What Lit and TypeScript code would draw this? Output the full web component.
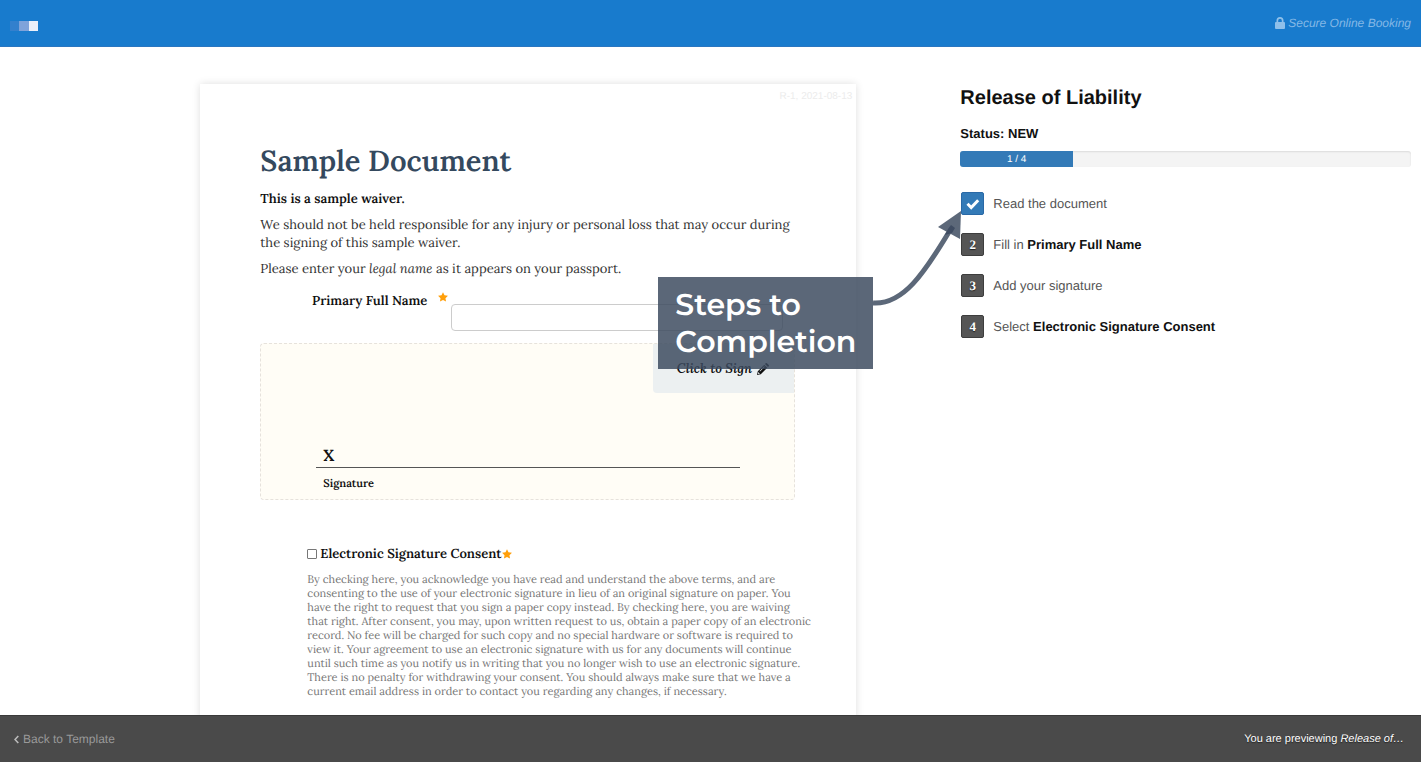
import { LitElement, html, css, svg } from "lit";
import { customElement, state } from "lit/decorators.js";
import { classMap } from "lit/directives/class-map.js";
import { styleMap } from "lit/directives/style-map.js";

const star = html`<svg class="star" viewBox="0 0 20 20" aria-hidden="true">
  <path d="M10 .3l3 6.300 6.900.9-5 4.800 1.200 6.900-6.100-3.400-6.100 3.400 1.200-6.900L.1 7.500l6.900-.9z" />
</svg>`;

const check = svg`<path d="M1.500 5.800L5.200 9.500L12.200 2.300" fill="none" stroke="#fff" stroke-width="3" />`;

interface Step {
  action: string;
  field?: string;
  done: boolean;
}

@customElement("app-root")
export class AppRoot extends LitElement {
  @state() private steps: Step[] = [
    { action: "Read the document", done: true },
    { action: "Fill in", field: "Primary Full Name", done: false },
    { action: "Add your signature", done: false },
    { action: "Select", field: "Electronic Signature Consent", done: false },
  ];

  static styles = css`
    :host {
      display: grid;
      grid-template-rows: auto minmax(0, 1fr) auto;
      height: 100vh;
      background: #fff;
      color: #555;
      font: 13px/18px "Helvetica Neue", "Liberation Sans", Arial, sans-serif;
      text-rendering: geometricPrecision;
    }
    *,
    *::before {
      box-sizing: border-box;
    }
    h1,
    h2,
    p,
    ol {
      margin: 0;
      padding: 0;
    }
    .top {
      display: flex;
      justify-content: space-between;
      align-items: center;
      height: 47px;
      padding: 0 10px;
      background: #187bcd;
      border-bottom: 1px solid #2a76c0;
    }
    .brand {
      display: flex;
      margin-top: 5px;
    }
    .brand span {
      width: 9px;
      height: 10px;
      background: #3380cd;
    }
    .brand span:nth-child(2) {
      width: 10px;
      background: #7fa3da;
    }
    .brand span:nth-child(3) {
      background: #ebf0fa;
    }
    .secure {
      display: flex;
      align-items: center;
      gap: 3px;
      color: #84b8e6;
      font-size: 12px;
      font-style: italic;
    }
    .secure svg {
      width: 10px;
      height: 12px;
      fill: #8fc0ea;
    }
    .body {
      display: grid;
      grid-template-columns: 2fr 1fr;
      overflow: hidden;
      padding-top: 37px;
    }
    .pane {
      display: flex;
      justify-content: flex-end;
      padding-right: 91px;
    }
    .doc {
      flex: 0 1 656px;
      height: max-content;
      padding: 4px 61px 40px 60px;
      background: #fff;
      box-shadow: 0 0 8px rgba(0, 0, 0, 0.13);
      color: #333;
      font: 13px/18px Lora, "Liberation Serif", serif;
    }
    .rev {
      margin-right: -57px;
      color: #ececec;
      font: 10px/18px "Liberation Sans", Arial, sans-serif;
      text-align: right;
    }
    .doc h1 {
      margin-top: 34px;
      color: #34495e;
      font-size: 29px;
      line-height: 42px;
      font-weight: 600;
    }
    .doc p {
      margin-top: 8px;
    }
    strong,
    label {
      font-weight: 600;
      color: #111;
    }
    .star {
      width: 10px;
      height: 10px;
      fill: #ff9f0a;
      flex: none;
    }
    .field {
      display: grid;
      grid-template-columns: 191px 1fr;
      margin-top: 14px;
    }
    .field label {
      display: flex;
      justify-content: flex-end;
      gap: 11px;
      padding-right: 3px;
    }
    .field input {
      width: 100%;
      height: 27px;
      margin-top: 12px;
      padding: 0 8px;
      border: 1px solid #ccc;
      border-radius: 4px;
      font: inherit;
    }
    .field div {
      padding-right: 12px;
    }
    .sign {
      display: flex;
      flex-direction: column;
      height: 157px;
      margin-top: 12px;
      border: 1px dashed #e6e2dc;
      border-radius: 4px;
      background: #fffdf6;
      color: #111;
      font-weight: 600;
    }
    .click {
      display: flex;
      align-self: flex-end;
      align-items: center;
      justify-content: center;
      gap: 5px;
      width: 141px;
      height: 49px;
      border: 0;
      border-radius: 0 0 0 4px;
      background: #ecf0f1;
      color: #111;
      font: italic 600 13px/18px Lora, "Liberation Serif", serif;
      padding: 0 2px 0 0;
    }
    .click svg {
      width: 12px;
      height: 12px;
      fill: #111;
    }
    .mark {
      margin: auto 54px 0 55px;
      padding: 0 7px;
      border-bottom: 1px solid #555;
      font-size: 16px;
      line-height: 22px;
    }
    .caption {
      padding: 7px 62px 6px;
      font-size: 11px;
      line-height: 18px;
    }
    .consent {
      margin: 45px 0 0 47px;
    }
    .tick {
      display: flex;
      align-items: center;
    }
    .tick input {
      appearance: none;
      width: 10px;
      height: 10px;
      margin: 0 3px 0 0;
      border: 1px solid #777;
      border-radius: 1px;
      background: #fff;
    }
    .doc .terms {
      color: #777;
      font-size: 11px;
      line-height: 14px;
      margin: 10px -16px 0 0;
    }
    .side {
      position: relative;
      padding: 0 10px 0 13px;
    }
    .side h2 {
      color: #111;
      font-size: 20px;
      line-height: 28px;
      font-weight: 600;
    }
    .side .status {
      margin-top: 13px;
      color: #111;
      font-weight: 600;
    }
    .bar {
      height: 16px;
      margin-top: 8px;
      overflow: hidden;
      border-radius: 3px;
      background: #f4f4f4;
      box-shadow: inset 0 1px 2px rgba(0, 0, 0, 0.1);
    }
    .fill {
      height: 100%;
      background: #337ab7;
      color: #fff;
      font-size: 10px;
      line-height: 18px;
      text-align: center;
    }
    .steps {
      display: grid;
      gap: 18px;
      margin-top: 25px;
      padding-left: 1px;
      list-style: none;
    }
    .steps li {
      display: flex;
      align-items: center;
      gap: 9px;
    }
    .badge {
      display: grid;
      place-items: center;
      width: 23px;
      height: 23px;
      border: 1px solid #3d3d3d;
      border-radius: 2px;
      background: #555;
      color: #fff;
      font: bold 13px/18px "Liberation Serif", serif;
      text-shadow: 0 1px 1px #222;
    }
    .badge.done {
      border-color: #2a69a6;
      background: #337ab7;
    }
    .badge svg {
      width: 14px;
      height: 12px;
    }
    .callout {
      position: absolute;
      top: 193px;
      right: 100%;
      width: 215px;
      margin-right: 74px;
      padding: 9px 17px;
      background: rgba(60, 74, 94, 0.84);
      color: #fff;
      font: 600 30px/37px Montserrat, Inter, sans-serif;
    }
    .arrow {
      position: absolute;
      top: 0;
      left: 100%;
      width: 90px;
      height: 92px;
      margin-top: -66px;
      overflow: visible;
    }
    .bottom {
      display: flex;
      align-items: center;
      justify-content: space-between;
      height: 47px;
      padding: 0 17px 0 14px;
      border-top: 1px solid #3a3a3a;
      background: #4a4a4a;
      color: #fff;
      font-size: 12px;
    }
    .preview {
      font-size: 11px;
      text-shadow: 0 1px 1px #222;
    }
    .bottom a {
      display: flex;
      align-items: center;
      gap: 4px;
      color: #999;
      text-decoration: none;
    }
    .bottom a svg {
      width: 5px;
      height: 9px;
    }
  `;

  render() {
    const done = this.steps.filter((s) => s.done).length;
    const total = this.steps.length;
    return html`
      <header class="top">
        <div class="brand"><span></span><span></span><span></span></div>
        <div class="secure">
          <svg viewBox="0 0 10 12" aria-hidden="true">
            <path fill-rule="evenodd" d="M1.500 5V3.500a3.500 3.500 0 0 1 7 0V5H9a1 1 0 0 1 1 1v5a1 1 0 0 1-1 1H1a1 1 0 0 1-1-1V6a1 1 0 0 1 1-1zM3.200 5h3.600V3.500a1.800 1.800 0 0 0-3.600 0z" />
          </svg>
          <span>Secure Online Booking</span>
        </div>
      </header>

      <main class="body">
        <section class="pane">
          <article class="doc">
            <div class="rev">R-1, 2021-08-13</div>
            <h1>Sample Document</h1>
            <p><strong>This is a sample waiver.</strong></p>
            <p>
              We should not be held responsible for any injury or personal loss that may occur during
              the signing of this sample waiver.
            </p>
            <p>Please enter your <em>legal name</em> as it appears on your passport.</p>
            <div class="field">
              <label for="name"><span>Primary Full Name</span>${star}</label>
              <div><input id="name" type="text" /></div>
            </div>
            <div class="sign">
              <button class="click" type="button">
                Click to Sign
                <svg viewBox="0 0 12 12" aria-hidden="true">
                  <path fill-rule="evenodd" d="M0 12l.8-3.800L7.300 1.700l3 3L3.800 11.200zM8 1l.7-.7q.6-.5 1.200 0L11.700 2.100q.5.6 0 1.200L11 4zM1.300 9.100l-.3 1.900 1.900-.3zM2.500 8l.5.500 4.700-4.700-.5-.5z" />
                </svg>
              </button>
              <div class="mark">X</div>
              <div class="caption">Signature</div>
            </div>
            <div class="consent">
              <div class="tick">
                <input id="consent" type="checkbox" />
                <label for="consent">Electronic Signature Consent</label>${star}
              </div>
              <p class="terms">
                By checking here, you acknowledge you have read and understand the above terms, and are
                consenting to the use of your electronic signature in lieu of an original signature on paper.
                You have the right to request that you sign a paper copy instead. By checking here, you are
                waiving that right. After consent, you may, upon written request to us, obtain a paper copy of
                an electronic record. No fee will be charged for such copy and no special hardware or software
                is required to view it. Your agreement to use an electronic signature with us for any documents
                will continue until such time as you notify us in writing that you no longer wish to use an
                electronic signature. There is no penalty for withdrawing your consent. You should always make
                sure that we have a current email address in order to contact you regarding any changes, if
                necessary.
              </p>
            </div>
          </article>
        </section>

        <aside class="side">
          <h2>Release of Liability</h2>
          <p class="status">Status: NEW</p>
          <div class="bar">
            <div class="fill" style=${styleMap({ width: `${(done / total) * 100}%` })}>${done} / ${total}</div>
          </div>
          <ol class="steps">
            ${this.steps.map(
              (s, i) => html`<li>
                <span class=${classMap({ badge: true, done: s.done })}
                  >${s.done ? html`<svg viewBox="0 0 14 12" role="img" aria-label="Done">${check}</svg>` : i + 1}</span
                >
                <span>${s.action} ${s.field ? html`<strong>${s.field}</strong>` : ""}</span>
              </li>`
            )}
          </ol>
          <div class="callout">
            Steps to Completion
            <svg class="arrow" viewBox="0 0 90 92" aria-hidden="true">
              <path d="M0 92C30 94 51 63 79 16" fill="none" stroke="#5c6879" stroke-width="5" />
              <path d="M88 0L65 16L87 28z" fill="#5c6879" />
              <path d="M75 18L78 14L82 17L79 22L72 24z" fill="#3f4c62" />
            </svg>
          </div>
        </aside>
      </main>

      <footer class="bottom">
        <a href="#template">
          <svg viewBox="0 0 5 9" aria-hidden="true">
            <path d="M4.300 1L1 4.500L4.300 8" fill="none" stroke="#bbb" stroke-width="1.600" />
          </svg>
          Back to Template
        </a>
        <div class="preview">You are previewing <em>Release of…</em></div>
      </footer>
    `;
  }
}
